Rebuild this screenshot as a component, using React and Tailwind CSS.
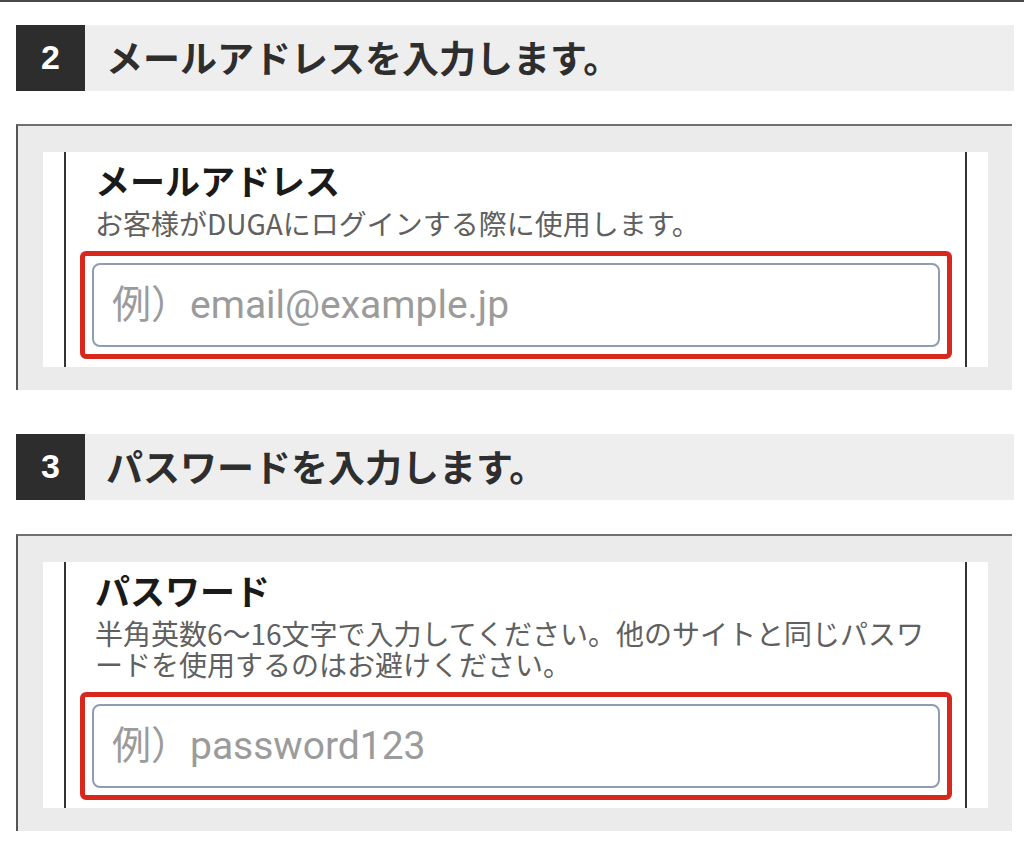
import React from "react";

const jp = { fontFamily: '"Noto Sans CJK JP", "Noto Sans", sans-serif' };

function StepHeader({ num, title }) {
  return (
    <div className="flex h-[66px] bg-[#eeeeee]">
      <div
        className="flex w-[69px] items-center justify-center bg-[#2d2d2d] pb-[2px] text-[34px] font-bold leading-none text-white"
        style={{ fontFamily: '"Liberation Sans", Arial, sans-serif' }}
      >
        {num}
      </div>
      <div className="flex items-center pb-[2px] pl-[21px] text-[37px] font-bold leading-none text-[#2e2e2e]" style={jp}>
        {title}
      </div>
    </div>
  );
}

function FieldPanel({ label, desc, placeholder, type }) {
  return (
    <div className="mr-[2px] border-l-2 border-t-2 border-l-[#555555] border-t-[#707070] bg-[#ebebeb] pb-[23px] pl-[25px] pr-[24px] pt-[26px]">
      <div className="bg-white px-[21px]">
        <div className="border-x-2 border-[#333333] pb-[8px] pt-[8px]" style={jp}>
          <div className="pl-[29px] text-[35px] font-bold leading-[40px] text-[#1a1a1a]">{label}</div>
          <div className="mt-[8px] pl-[29px] text-[28px] leading-[31px] text-[#606060]">{desc}</div>
          <div className="ml-[14px] mr-[13px] mt-[12px] rounded-[6px] border-[5px] border-[#d8281e] p-[7px]">
            <input
              type={type}
              placeholder={placeholder}
              className="block h-[84px] w-full rounded-[8px] border-2 border-[#8e9db3] bg-white pl-[18px] text-[39px] text-[#333] outline-none placeholder:text-[#9b9b9b]"
              style={{ fontFamily: 'Roboto, "Noto Sans CJK JP", sans-serif' }}
            />
          </div>
        </div>
      </div>
    </div>
  );
}

export default function App() {
  return (
    <div className="min-h-[850px] border-t-2 border-[#4a4a4a] bg-white pl-4 pr-[10px] pt-[23px]">
      <StepHeader num="2" title="メールアドレスを入力します。" />
      <div className="mt-[33px]">
        <FieldPanel
          label="メールアドレス"
          desc="お客様がDUGAにログインする際に使用します。"
          placeholder="例）email@example.jp"
          type="email"
        />
      </div>

      <div className="mt-[44px]">
        <StepHeader num="3" title="パスワードを入力します。" />
      </div>
      <div className="mt-[34px]">
        <FieldPanel
          label="パスワード"
          desc={
            <>
              半角英数6〜16文字で入力してください。他のサイトと同じパスワ
              <br />
              ードを使用するのはお避けください。
            </>
          }
          placeholder="例）password123"
          type="password"
        />
      </div>
    </div>
  );
}
